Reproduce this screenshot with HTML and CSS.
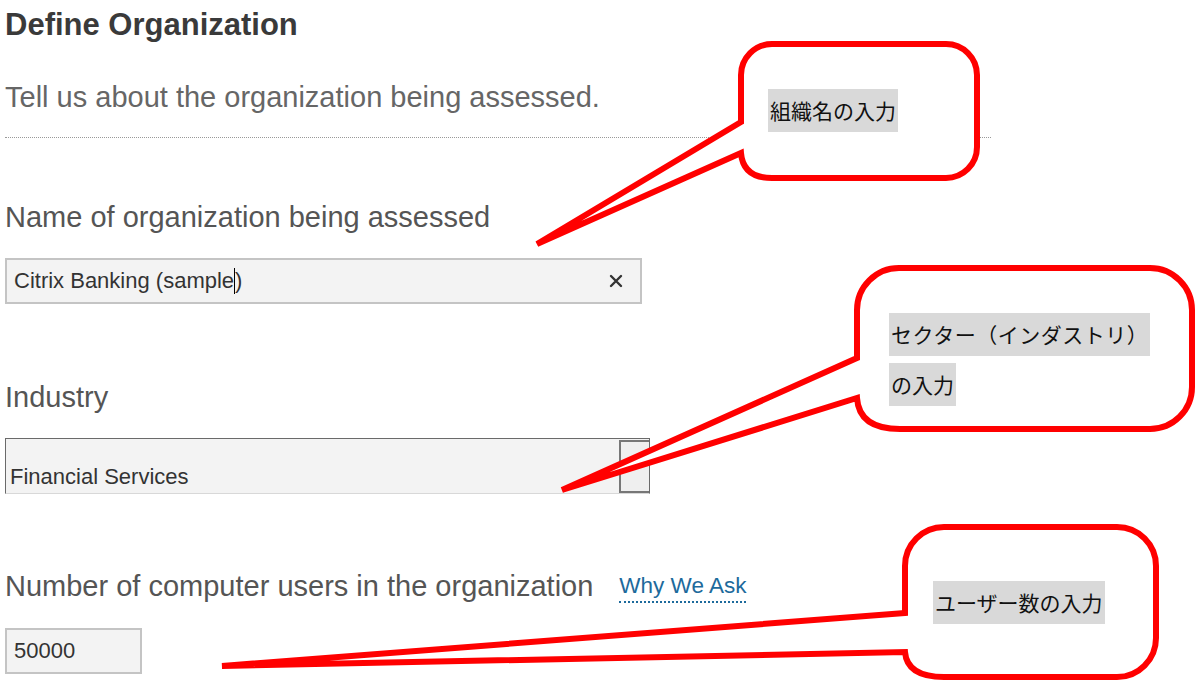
FILE: index.html
```html
<!DOCTYPE html>
<html lang="en">
<head>
    <meta charset="UTF-8">
    <meta name="viewport" content="width=device-width, initial-scale=1.0">
    <title>Define Organization</title>
    <link rel="stylesheet" href="styles.css">
</head>
<body>

<div class="page">
    <h1 class="title">Define Organization</h1>
    <p class="intro">Tell us about the organization being assessed.</p>

    <!-- Organization name -->
    <div class="field field-name">
        <label class="field-label">Name of organization being assessed</label>
        <div class="text-input text-input-wide">
            <span class="value">Citrix Banking (sample<span class="caret"></span>)</span>
            <svg class="clear" width="14" height="14" viewBox="0 0 14 14">
                <path d="M2 2 L12 12 M12 2 L2 12" stroke="#333" stroke-width="2.4" stroke-linecap="round"/>
            </svg>
        </div>
    </div>

    <!-- Industry -->
    <div class="field field-industry">
        <label class="field-label">Industry</label>
        <div class="select-box">
            <span class="value">Financial Services</span>
            <span class="select-btn"></span>
        </div>
    </div>

    <!-- Users -->
    <div class="field field-users">
        <div class="label-row">
            <label class="field-label">Number of computer users in the organization</label>
            <a class="why-link">Why We Ask</a>
        </div>
        <div class="text-input text-input-small">
            <span class="value">50000</span>
        </div>
    </div>
</div>

<!-- Annotation callouts drawn over the form -->
<svg class="callouts" width="1200" height="690" viewBox="0 0 1200 690">
    <g fill="#fff" stroke="#ff0000" stroke-width="6" stroke-linejoin="miter">
        <path d="M741 122 L537 244 L741 153 Q743 178 772 178 H946 A31 31 0 0 0 977 147 V75 A31 31 0 0 0 946 44 H772 A31 31 0 0 0 741 75 Z"/>
        <path d="M857 358 L562 490 L857 398 Q859 429 900 429 H1150 A42 42 0 0 0 1192 387 V310 A42 42 0 0 0 1150 268 H899 A42 42 0 0 0 857 310 Z"/>
        <path d="M905 613 L222 666 L905 652 Q907 677 944 677 H1117 A39 39 0 0 0 1156 638 V566 A39 39 0 0 0 1117 527 H944 A39 39 0 0 0 905 566 Z"/>
    </g>
</svg>

<div class="note note-1"><span>組織名の入力</span></div>
<div class="note note-2"><span class="wide">セクター（インダストリ）</span><span>の入力</span></div>
<div class="note note-3"><span>ユーザー数の入力</span></div>

</body>
</html>
```

FILE: styles.css
```css
body {
    margin: 0;
    padding: 0;
    background-color: #fff;
    font-family: "Liberation Sans", Arial, sans-serif;
    color: #333;
}

.page {
    padding: 7px 0 0 5px;
    width: 986px;
}

.title {
    margin: 0;
    font-size: 31px;
    line-height: 36px;
    font-weight: bold;
    color: #3a3a3a;
}

.intro {
    margin: 37px 0 0 0;
    padding-bottom: 23px;
    font-size: 29px;
    line-height: 34px;
    color: #666;
    border-bottom: 1px dotted #999;
}

.field-label {
    display: block;
    font-size: 29px;
    line-height: 34px;
    color: #555;
}

.field-name {
    margin-top: 62px;
}

.field-industry {
    margin-top: 76px;
}

.field-users {
    margin-top: 75px;
}

.field-name .field-label,
.field-industry .field-label {
    margin-bottom: 24px;
}

.label-row {
    display: flex;
    align-items: flex-start;
    gap: 26px;
    height: 34px;
    margin-bottom: 25px;
}

.why-link {
    margin-top: 5px;
    font-size: 22.5px;
    line-height: 24px;
    color: #1d6a9c;
    border-bottom: 2px dotted #1d6a9c;
    padding-bottom: 3px;
}

.text-input {
    display: flex;
    align-items: center;
    justify-content: space-between;
    box-sizing: border-box;
    height: 46px;
    padding: 0 17px 0 7px;
    background-color: #f3f3f3;
    border: 2px solid #c4c4c4;
    font-size: 22px;
    color: #333;
}

.text-input-wide {
    width: 637px;
}

.text-input-small {
    width: 137px;
}

.caret {
    display: inline-block;
    width: 1px;
    height: 26px;
    margin: 0 0 -6px 0;
    background-color: #000;
}

.select-box {
    display: flex;
    align-items: flex-end;
    justify-content: space-between;
    box-sizing: border-box;
    width: 645px;
    height: 56px;
    background-color: #f3f3f3;
    border: 1px solid #6a6a6a;
    border-bottom-color: #d8d8d8;
    font-size: 22px;
    line-height: 22px;
    color: #333;
}

.select-box .value {
    padding: 0 0 5px 4px;
}

.select-btn {
    align-self: stretch;
    box-sizing: border-box;
    width: 30px;
    margin: 1px 0 0 0;
    background-color: #efefef;
    border: 2px solid #777;
    border-right: none;
}

.callouts {
    position: absolute;
    left: 0;
    top: 0;
}

.note {
    position: absolute;
    display: flex;
    flex-direction: column;
    align-items: flex-start;
    gap: 7px;
    font-family: "Noto Sans CJK JP", sans-serif;
    font-size: 21px;
    color: #111;
}

.note span {
    display: block;
    padding: 0 2px;
    line-height: 43px;
    background-color: #d9d9d9;
}

.note span.wide {
    letter-spacing: 0.5px;
}

.note-1 {
    left: 768px;
    top: 89px;
}

.note-2 {
    left: 889px;
    top: 313px;
}

.note-3 {
    left: 933px;
    top: 581px;
}
```
